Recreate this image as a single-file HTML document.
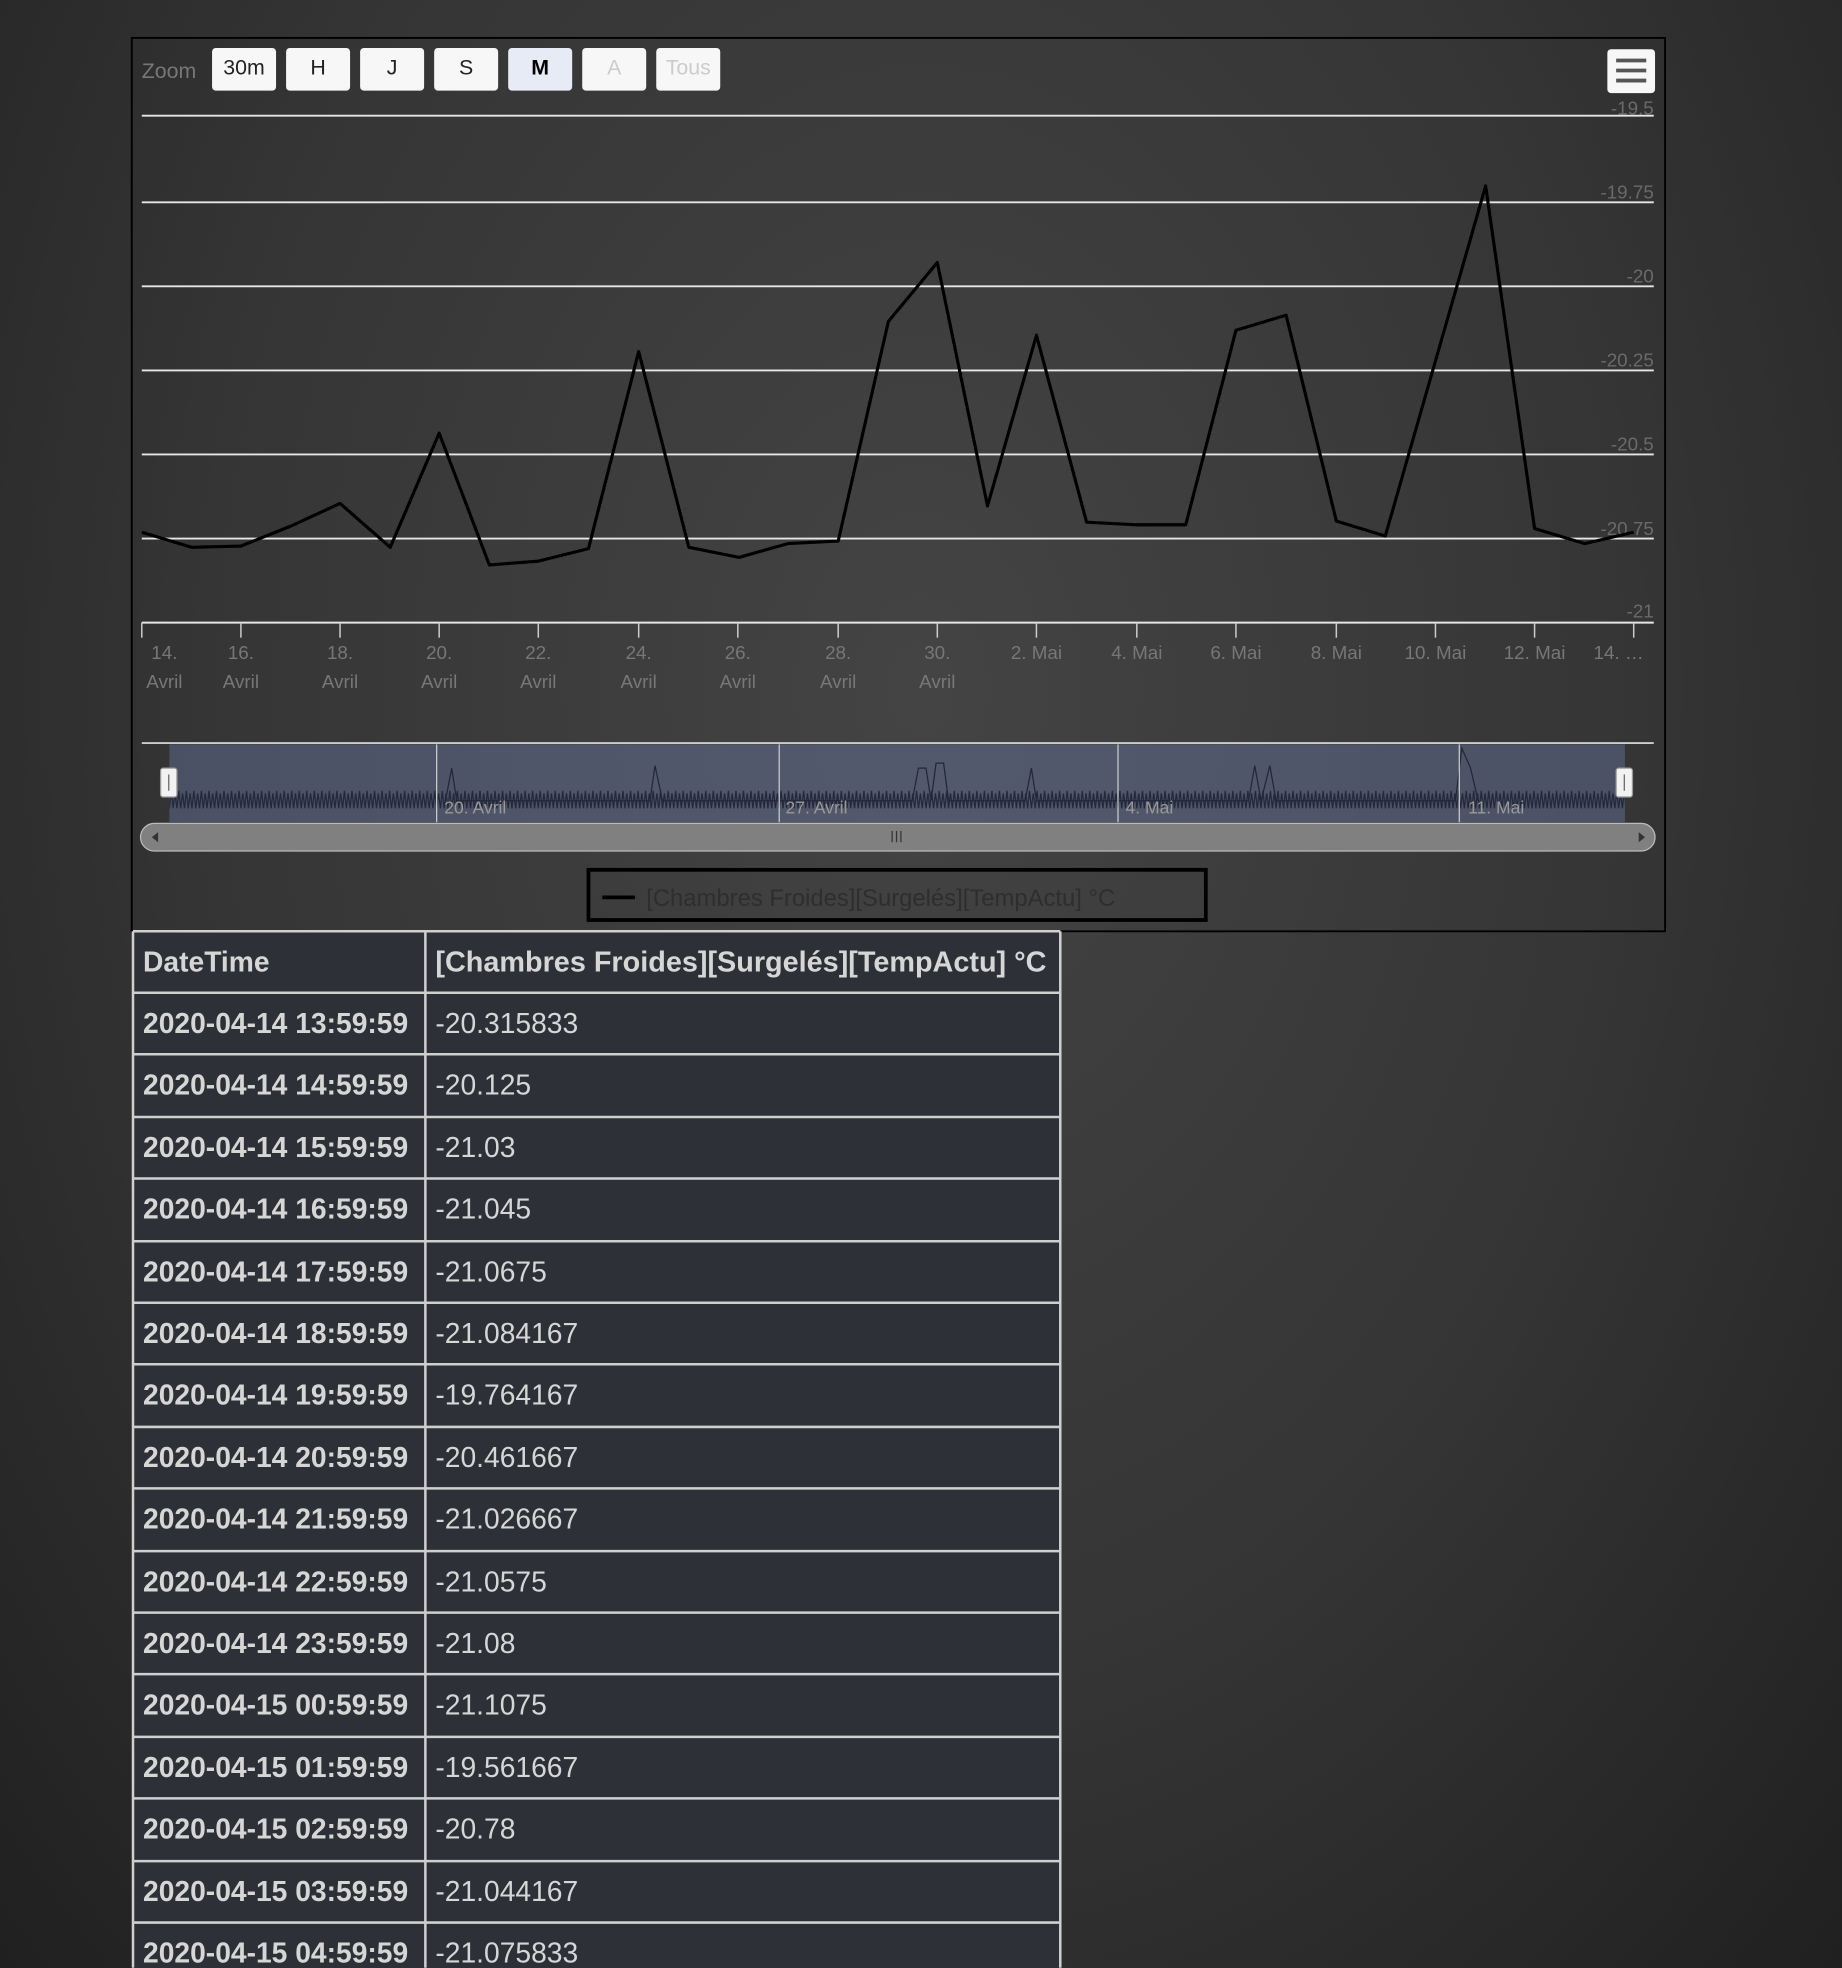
<!DOCTYPE html>
<html><head><meta charset="utf-8"><style>
html,body{margin:0;padding:0;width:1842px;height:1968px;overflow:hidden;background:#353535;}
body{background:radial-gradient(ellipse at 50% 35%,#444 0%,#353535 55%,#202020 100%);}
svg{position:absolute;left:0;top:0;}
text{font-family:"Liberation Sans",sans-serif;}
</style></head><body>
<svg width="1842" height="1968" viewBox="0 0 1468 1568">
<defs>
<pattern id="zz" x="135" y="622" width="6" height="26" patternUnits="userSpaceOnUse">
<path d="M0 22 L1.5 8 L3 22 L4.5 10 L6 22" fill="none" stroke="#23273a" stroke-width="1"/>
</pattern>
</defs>
<rect x="105" y="30" width="1222" height="712" fill="none" stroke="#000" stroke-width="1.5"/>
<text x="113" y="62" font-size="17" fill="#777">Zoom</text>
<g font-size="17" text-anchor="middle">
<rect x="169" y="38" width="51" height="34" rx="3" fill="#f7f7f7"/><text x="194.5" y="59" fill="#222">30m</text>
<rect x="228" y="38" width="51" height="34" rx="3" fill="#f7f7f7"/><text x="253.5" y="59" fill="#222">H</text>
<rect x="287" y="38" width="51" height="34" rx="3" fill="#f7f7f7"/><text x="312.5" y="59" fill="#222">J</text>
<rect x="346" y="38" width="51" height="34" rx="3" fill="#f7f7f7"/><text x="371.5" y="59" fill="#222">S</text>
<rect x="405" y="38" width="51" height="34" rx="3" fill="#e6ebf5"/><text x="430.5" y="59" fill="#000" font-weight="bold">M</text>
<rect x="464" y="38" width="51" height="34" rx="3" fill="#f7f7f7"/><text x="489.5" y="59" fill="#ccc">A</text>
<rect x="523" y="38" width="51" height="34" rx="3" fill="#f7f7f7"/><text x="548.5" y="59" fill="#ccc">Tous</text>
</g>
<rect x="1281" y="39" width="38" height="35" rx="3" fill="#f7f7f7"/>
<g stroke="#555" stroke-width="3"><line x1="1288" y1="48" x2="1312" y2="48"/><line x1="1288" y1="56" x2="1312" y2="56"/><line x1="1288" y1="64" x2="1312" y2="64"/></g>
<g stroke="#e6e6e6" stroke-width="1.5">
<line x1="113" y1="92" x2="1318" y2="92"/><line x1="113" y1="161" x2="1318" y2="161"/><line x1="113" y1="228" x2="1318" y2="228"/><line x1="113" y1="295" x2="1318" y2="295"/><line x1="113" y1="362" x2="1318" y2="362"/><line x1="113" y1="429" x2="1318" y2="429"/><line x1="113" y1="496" x2="1318" y2="496"/>
</g>
<g font-size="15" fill="#6a6a6a" text-anchor="end">
<text x="1318" y="91">-19.5</text><text x="1318" y="158">-19.75</text><text x="1318" y="225">-20</text><text x="1318" y="292">-20.25</text><text x="1318" y="359">-20.5</text><text x="1318" y="426">-20.75</text><text x="1318" y="492">-21</text>
</g>
<g stroke="#ccc" stroke-width="1.2">
<line x1="113" y1="496" x2="113" y2="508"/><line x1="192" y1="496" x2="192" y2="508"/><line x1="271" y1="496" x2="271" y2="508"/><line x1="350" y1="496" x2="350" y2="508"/><line x1="429" y1="496" x2="429" y2="508"/><line x1="509" y1="496" x2="509" y2="508"/><line x1="588" y1="496" x2="588" y2="508"/><line x1="668" y1="496" x2="668" y2="508"/><line x1="747" y1="496" x2="747" y2="508"/><line x1="826" y1="496" x2="826" y2="508"/><line x1="906" y1="496" x2="906" y2="508"/><line x1="985" y1="496" x2="985" y2="508"/><line x1="1065" y1="496" x2="1065" y2="508"/><line x1="1144" y1="496" x2="1144" y2="508"/><line x1="1223" y1="496" x2="1223" y2="508"/><line x1="1302" y1="496" x2="1302" y2="508"/>
</g>
<g font-size="15" fill="#777" text-anchor="middle">
<text x="131" y="525">14.</text><text x="131" y="548">Avril</text>
<text x="192" y="525">16.</text><text x="192" y="548">Avril</text>
<text x="271" y="525">18.</text><text x="271" y="548">Avril</text>
<text x="350" y="525">20.</text><text x="350" y="548">Avril</text>
<text x="429" y="525">22.</text><text x="429" y="548">Avril</text>
<text x="509" y="525">24.</text><text x="509" y="548">Avril</text>
<text x="588" y="525">26.</text><text x="588" y="548">Avril</text>
<text x="668" y="525">28.</text><text x="668" y="548">Avril</text>
<text x="747" y="525">30.</text><text x="747" y="548">Avril</text>
<text x="826" y="525">2. Mai</text><text x="906" y="525">4. Mai</text><text x="985" y="525">6. Mai</text><text x="1065" y="525">8. Mai</text><text x="1144" y="525">10. Mai</text><text x="1223" y="525">12. Mai</text><text x="1290" y="525">14. …</text>
</g>
<polyline fill="none" stroke="#000" stroke-width="2.5" stroke-linejoin="round" points="113,424 153,436 192,435 232,419 271,401 311,436 350,345 390,450 429,447 469,437 509,280 549,436 589,444 628,433 668,431 708,256 747,209 787,403 826,267 866,416 906,418 945,418 985,263 1025,251 1065,415 1104,427 1184,148 1223,421 1263,433 1302,424"/>
<line x1="113" y1="592" x2="1318" y2="592" stroke="#ccc" stroke-width="1.5"/>
<rect x="135" y="593" width="1160" height="62" fill="#66759f" fill-opacity="0.45"/>
<rect x="135" y="622" width="1160" height="26" fill="url(#zz)"/>
<polyline fill="none" stroke="#23273a" stroke-width="1" points="355,638 360,612 364,638 518,638 522,610 528,638 727,638 732,612 738,612 742,638 746,608 752,608 756,638 817,638 822,612 826,638 995,638 1000,610 1005,638 1012,610 1017,638 1160,638 1165,596 1172,612 1178,638"/>
<g stroke="#ccc" stroke-width="1"><line x1="348" y1="593" x2="348" y2="655"/><line x1="621" y1="593" x2="621" y2="655"/><line x1="891" y1="593" x2="891" y2="655"/><line x1="1163" y1="593" x2="1163" y2="655"/></g>
<g font-size="14" fill="#999"><text x="354" y="648">20. Avril</text><text x="626" y="648">27. Avril</text><text x="897" y="648">4. Mai</text><text x="1170" y="648">11. Mai</text></g>
<rect x="128" y="612" width="13" height="23" rx="2" fill="#f2f2f2" stroke="#999"/><line x1="134.5" y1="617" x2="134.5" y2="630" stroke="#666"/>
<rect x="1288" y="612" width="13" height="23" rx="2" fill="#f2f2f2" stroke="#999"/><line x1="1294.5" y1="617" x2="1294.5" y2="630" stroke="#666"/>
<rect x="112" y="656" width="1207" height="22" rx="11" fill="#808080" stroke="#bbb"/>
<rect x="135" y="657" width="1160" height="20" fill="#808080"/>
<g stroke="#333" stroke-width="1"><line x1="711" y1="662" x2="711" y2="671"/><line x1="714.5" y1="662" x2="714.5" y2="671"/><line x1="718" y1="662" x2="718" y2="671"/></g>
<path d="M126 663 L121 667 L126 671Z" fill="#333"/><path d="M1306 663 L1311 667 L1306 671Z" fill="#333"/>
<rect x="469" y="693" width="492" height="40" fill="none" stroke="#000" stroke-width="3"/>
<line x1="480" y1="715" x2="506" y2="715" stroke="#000" stroke-width="3"/>
<text x="515" y="722" font-size="19" fill="#2e2e2e">[Chambres Froides][Surgelés][TempActu] °C</text>
<rect x="106" y="742" width="739" height="840" fill="#2d3036"/>
<g stroke="#cfcfcf" stroke-width="2" fill="none">
<line x1="106" y1="742" x2="845" y2="742"/>
<line x1="106" y1="742" x2="106" y2="1568"/><line x1="339" y1="742" x2="339" y2="1568"/><line x1="845" y1="742" x2="845" y2="1568"/>
<line x1="106" y1="791" x2="845" y2="791"/><line x1="106" y1="840" x2="845" y2="840"/><line x1="106" y1="890" x2="845" y2="890"/><line x1="106" y1="939" x2="845" y2="939"/><line x1="106" y1="989" x2="845" y2="989"/><line x1="106" y1="1038" x2="845" y2="1038"/><line x1="106" y1="1087" x2="845" y2="1087"/><line x1="106" y1="1137" x2="845" y2="1137"/><line x1="106" y1="1186" x2="845" y2="1186"/><line x1="106" y1="1236" x2="845" y2="1236"/><line x1="106" y1="1285" x2="845" y2="1285"/><line x1="106" y1="1334" x2="845" y2="1334"/><line x1="106" y1="1384" x2="845" y2="1384"/><line x1="106" y1="1433" x2="845" y2="1433"/><line x1="106" y1="1483" x2="845" y2="1483"/><line x1="106" y1="1532" x2="845" y2="1532"/>
</g>
<g font-size="22.5" fill="#d6d6d6">
<text x="114" y="774" font-weight="bold">DateTime</text><text x="347" y="774" font-weight="bold" textLength="487" lengthAdjust="spacingAndGlyphs">[Chambres Froides][Surgelés][TempActu] °C</text>
<g font-weight="bold">
<text x="114" y="823">2020-04-14 13:59:59</text><text x="114" y="872">2020-04-14 14:59:59</text><text x="114" y="922">2020-04-14 15:59:59</text><text x="114" y="971">2020-04-14 16:59:59</text><text x="114" y="1021">2020-04-14 17:59:59</text><text x="114" y="1070">2020-04-14 18:59:59</text><text x="114" y="1119">2020-04-14 19:59:59</text><text x="114" y="1169">2020-04-14 20:59:59</text><text x="114" y="1218">2020-04-14 21:59:59</text><text x="114" y="1268">2020-04-14 22:59:59</text><text x="114" y="1317">2020-04-14 23:59:59</text><text x="114" y="1366">2020-04-15 00:59:59</text><text x="114" y="1416">2020-04-15 01:59:59</text><text x="114" y="1465">2020-04-15 02:59:59</text><text x="114" y="1515">2020-04-15 03:59:59</text><text x="114" y="1564">2020-04-15 04:59:59</text>
</g>
<text x="347" y="823">-20.315833</text><text x="347" y="872">-20.125</text><text x="347" y="922">-21.03</text><text x="347" y="971">-21.045</text><text x="347" y="1021">-21.0675</text><text x="347" y="1070">-21.084167</text><text x="347" y="1119">-19.764167</text><text x="347" y="1169">-20.461667</text><text x="347" y="1218">-21.026667</text><text x="347" y="1268">-21.0575</text><text x="347" y="1317">-21.08</text><text x="347" y="1366">-21.1075</text><text x="347" y="1416">-19.561667</text><text x="347" y="1465">-20.78</text><text x="347" y="1515">-21.044167</text><text x="347" y="1564">-21.075833</text>
</g>
</svg>
</body></html>
